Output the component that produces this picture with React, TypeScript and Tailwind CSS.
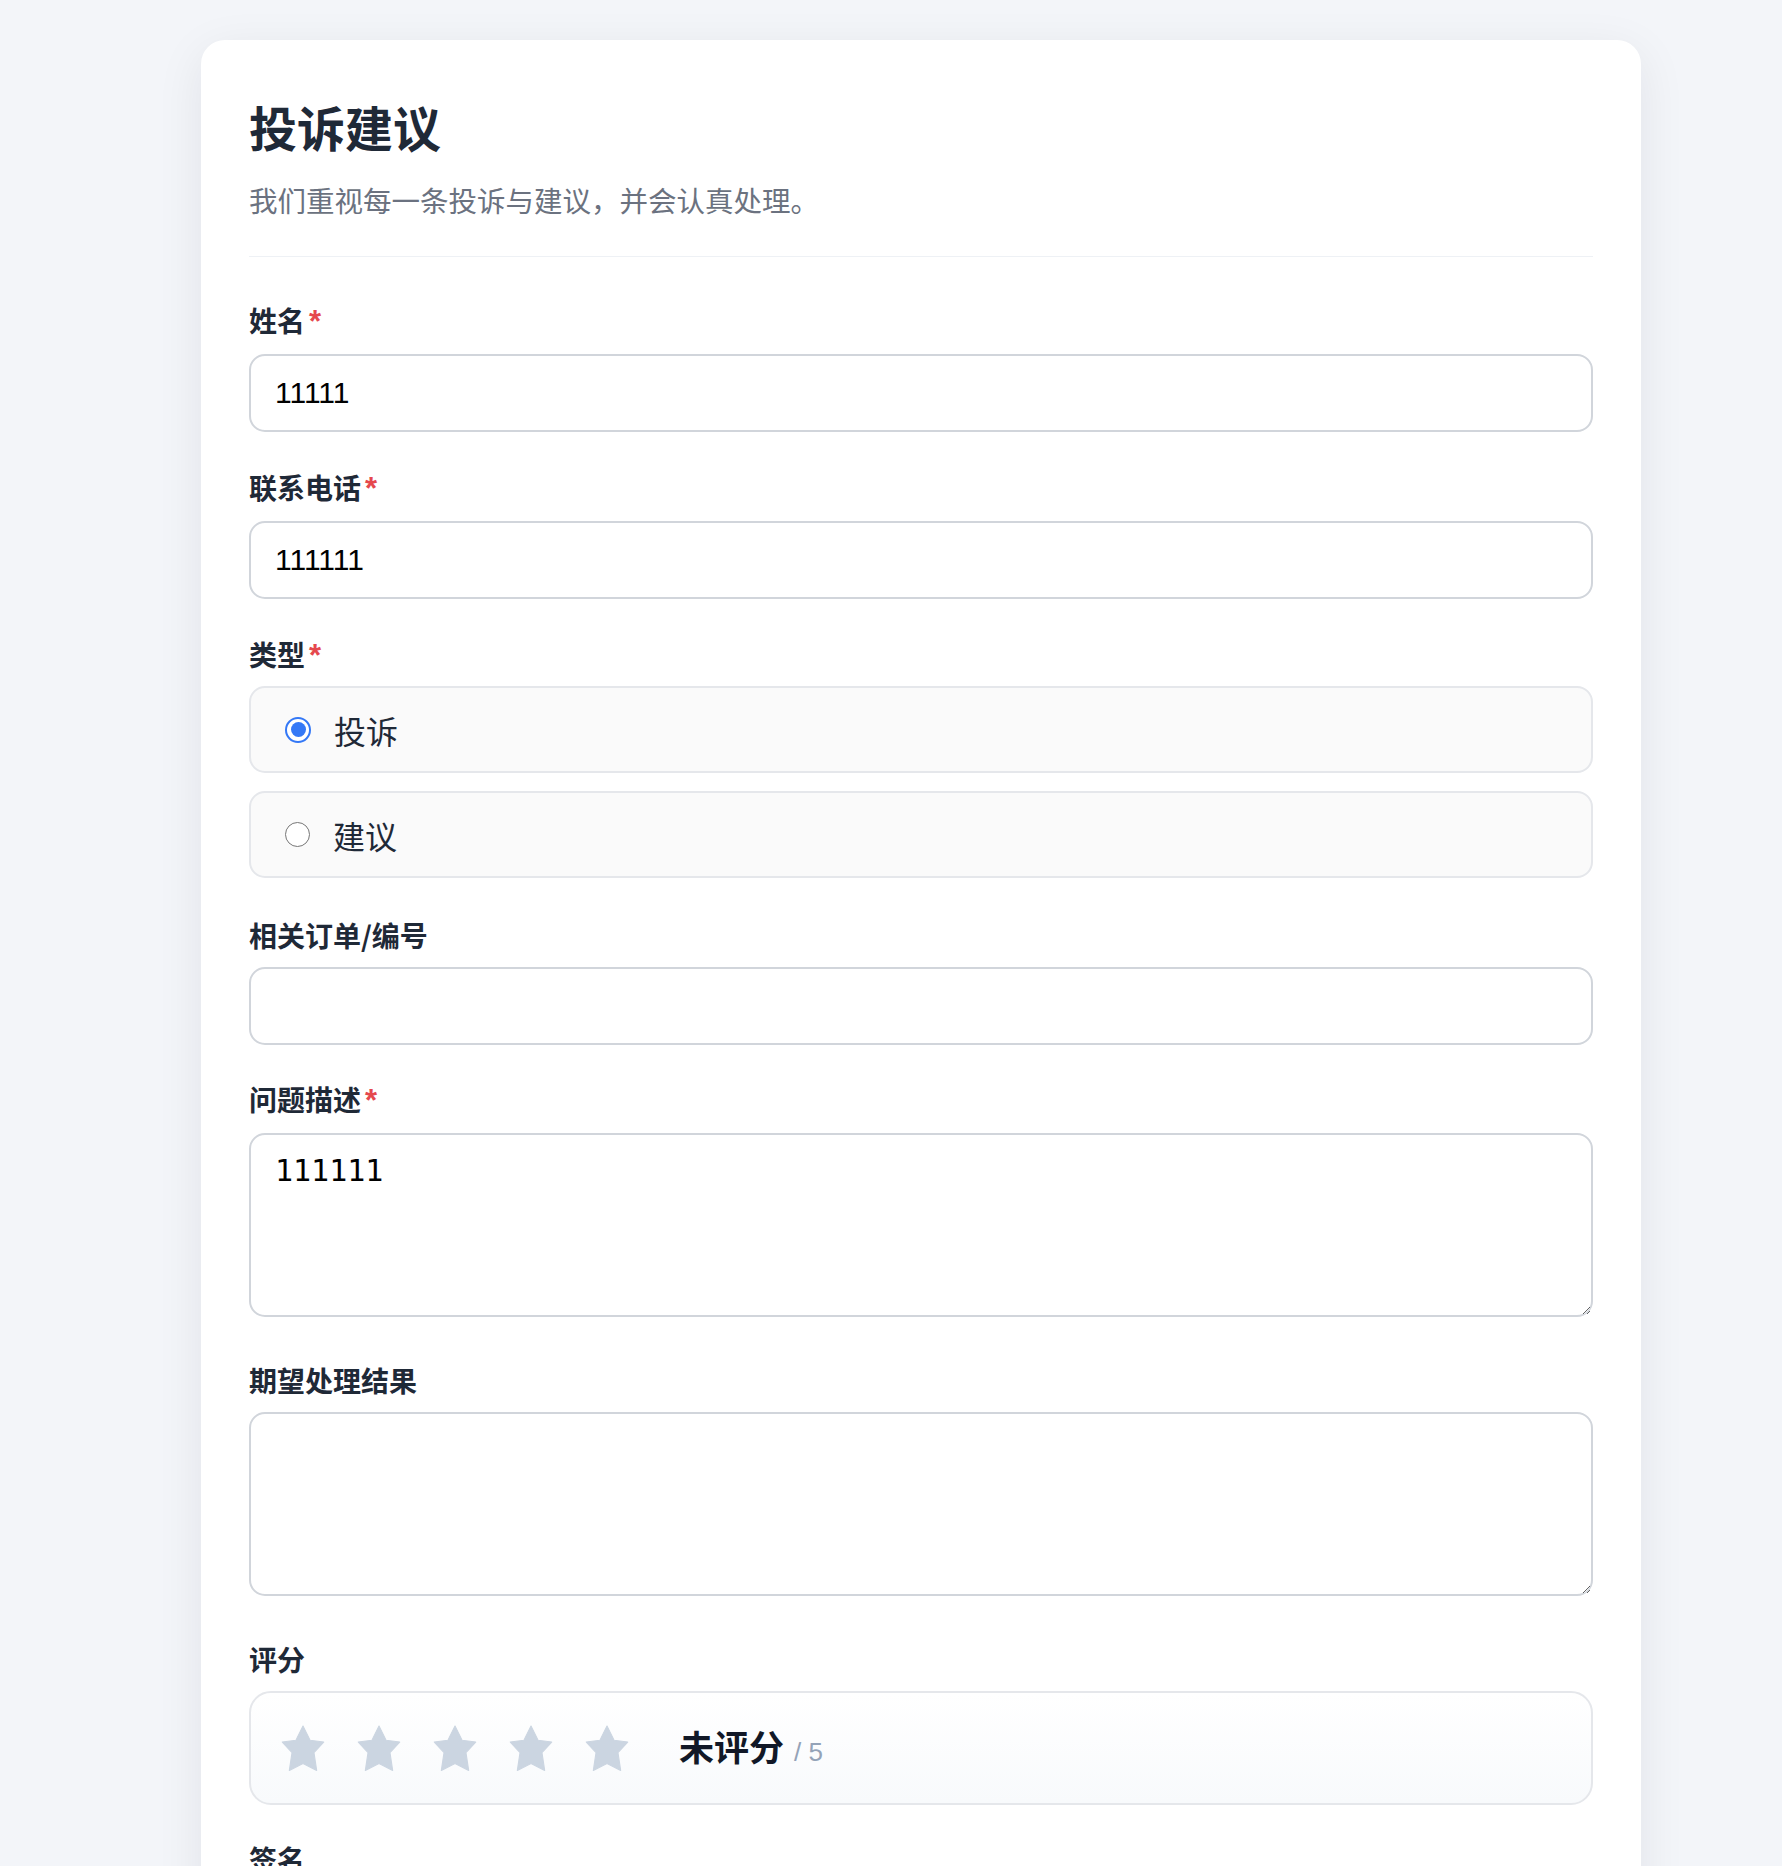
import React, { useState } from "react";

const CJK = "font-['Noto_Sans_CJK_SC','Noto_Sans',sans-serif]";

function Star({ filled }: { filled: boolean }) {
  return (
    <svg width="44" height="47" viewBox="0 0 38 42" className="shrink-0">
      <polygon
        points="19,1 25.3,13.6 37.5,15.2 28.8,24.6 31.2,40.6 19,34.4 6.8,40.6 9.2,24.6 0.5,15.2 12.7,13.6"
        fill={filled ? "#f59e0b" : "#cbd5e1"}
        stroke={filled ? "#f59e0b" : "#cbd5e1"}
        strokeWidth="1"
        strokeLinejoin="round"
      />
    </svg>
  );
}

function Label({ text, required }: { text: string; required?: boolean }) {
  return (
    <label className={`block text-[28px] leading-[40px] font-bold text-[#1f2937] ${CJK}`}>
      {text}
      {required && (
        <span className="ml-[4px] text-[31px] text-[#e5484d] font-['Liberation_Sans',sans-serif]">*</span>
      )}
    </label>
  );
}

function Radio({ checked, label, onClick }: { checked: boolean; label: string; onClick: () => void }) {
  return (
    <button
      type="button"
      onClick={onClick}
      className="flex h-[87px] w-full items-center rounded-[16px] border-2 border-[#e5e7eb] bg-[#fafafa] pl-[34px] text-left"
    >
      {checked ? (
        <span className="flex h-[26px] w-[26px] items-center justify-center rounded-full border-2 border-[#3478f6] bg-white">
          <span className="h-[15px] w-[15px] rounded-full bg-[#3478f6]" />
        </span>
      ) : (
        <span className="h-[25px] w-[25px] rounded-full border-[1.5px] border-[#767676] bg-white" />
      )}
      <span className={`ml-[23px] text-[32px] leading-[40px] text-[#1f2937] ${CJK}`}>{label}</span>
    </button>
  );
}

export default function App() {
  const [kind, setKind] = useState<"complaint" | "suggestion">("complaint");
  const [rating] = useState(0);

  const inputCls =
    "block h-[78px] w-full rounded-[16px] border-2 border-[#d1d5db] bg-white px-[24px] text-[30px] text-black outline-none font-['Liberation_Sans','Noto_Sans_CJK_SC',sans-serif]";
  const areaCls =
    "block h-[184px] w-full rounded-[16px] border-2 border-[#d1d5db] bg-white px-[24px] py-[18px] text-[30px] leading-[35px] text-black outline-none font-['DejaVu_Sans_Mono','Noto_Sans_CJK_SC',monospace]";

  return (
    <div className="min-h-screen w-full bg-[#f3f5f9] pt-[40px] pb-[60px]">
      <div className="ml-[201px] w-[1440px] rounded-[24px] bg-white px-[48px] pt-[56px] pb-[56px] shadow-[0_12px_48px_rgba(15,23,42,0.08)]">
        <header className="border-b border-[#eef1f5] pb-[36px]">
          <h1 className={`text-[48px] leading-[60px] font-bold text-[#1f2937] ${CJK}`}>投诉建议</h1>
          <p className={`mt-[24px] text-[28.5px] leading-[40px] text-[#6b7280] ${CJK}`}>
            我们重视每一条投诉与建议，并会认真处理。
          </p>
        </header>

        <form className="mt-[43px] flex flex-col gap-[34px]" onSubmit={(e) => e.preventDefault()}>
          <div className="flex flex-col gap-[12px]">
            <Label text="姓名" required />
            <input className={inputCls} defaultValue="11111" />
          </div>

          <div className="flex flex-col gap-[12px] pt-[1px]">
            <Label text="联系电话" required />
            <input className={inputCls} defaultValue="111111" />
          </div>

          <div className="flex flex-col gap-[10px] pt-[1px]">
            <Label text="类型" required />
            <div className="flex flex-col gap-[18px]">
              <Radio checked={kind === "complaint"} label="投诉" onClick={() => setKind("complaint")} />
              <Radio checked={kind === "suggestion"} label="建议" onClick={() => setKind("suggestion")} />
            </div>
          </div>

          <div className="flex flex-col gap-[12px] pt-[3px]">
            <Label text="相关订单/编号" />
            <input className={inputCls} defaultValue="" />
          </div>

          <div className="flex flex-col gap-[12px] pb-[9px]">
            <Label text="问题描述" required />
            <textarea className={areaCls} defaultValue="111111" />
          </div>

          <div className="flex flex-col gap-[12px] pb-[9px]">
            <Label text="期望处理结果" />
            <textarea className={areaCls} defaultValue="" />
          </div>

          <div className="flex flex-col gap-[12px]">
            <Label text="评分" />
            <div className="flex h-[114px] items-center rounded-[22px] border-2 border-[#e5e7eb] bg-gradient-to-b from-white to-[#f8fafc] pl-[30px]">
              <div className="flex items-center gap-[32px]">
                {[1, 2, 3, 4, 5].map((n) => (
                  <Star key={n} filled={n <= rating} />
                ))}
              </div>
              <div className="ml-[50px] flex items-baseline">
                <span className={`text-[35px] leading-[44px] font-bold text-[#111827] ${CJK}`}>
                  {rating === 0 ? "未评分" : `${rating} 分`}
                </span>
                <span className="ml-[10px] text-[26px] text-[#94a3b8] font-['Liberation_Sans',sans-serif]">/ 5</span>
              </div>
            </div>
          </div>

          <div className="flex flex-col gap-[12px]">
            <Label text="签名" />
            <div className="h-[220px] w-full rounded-[16px] border-2 border-dashed border-[#d1d5db] bg-[#fafafa]" />
          </div>

          <button
            type="submit"
            className={`mt-[10px] h-[78px] w-full rounded-[16px] bg-[#3478f6] text-[30px] font-bold text-white ${CJK}`}
          >
            提交
          </button>
        </form>
      </div>
    </div>
  );
}
